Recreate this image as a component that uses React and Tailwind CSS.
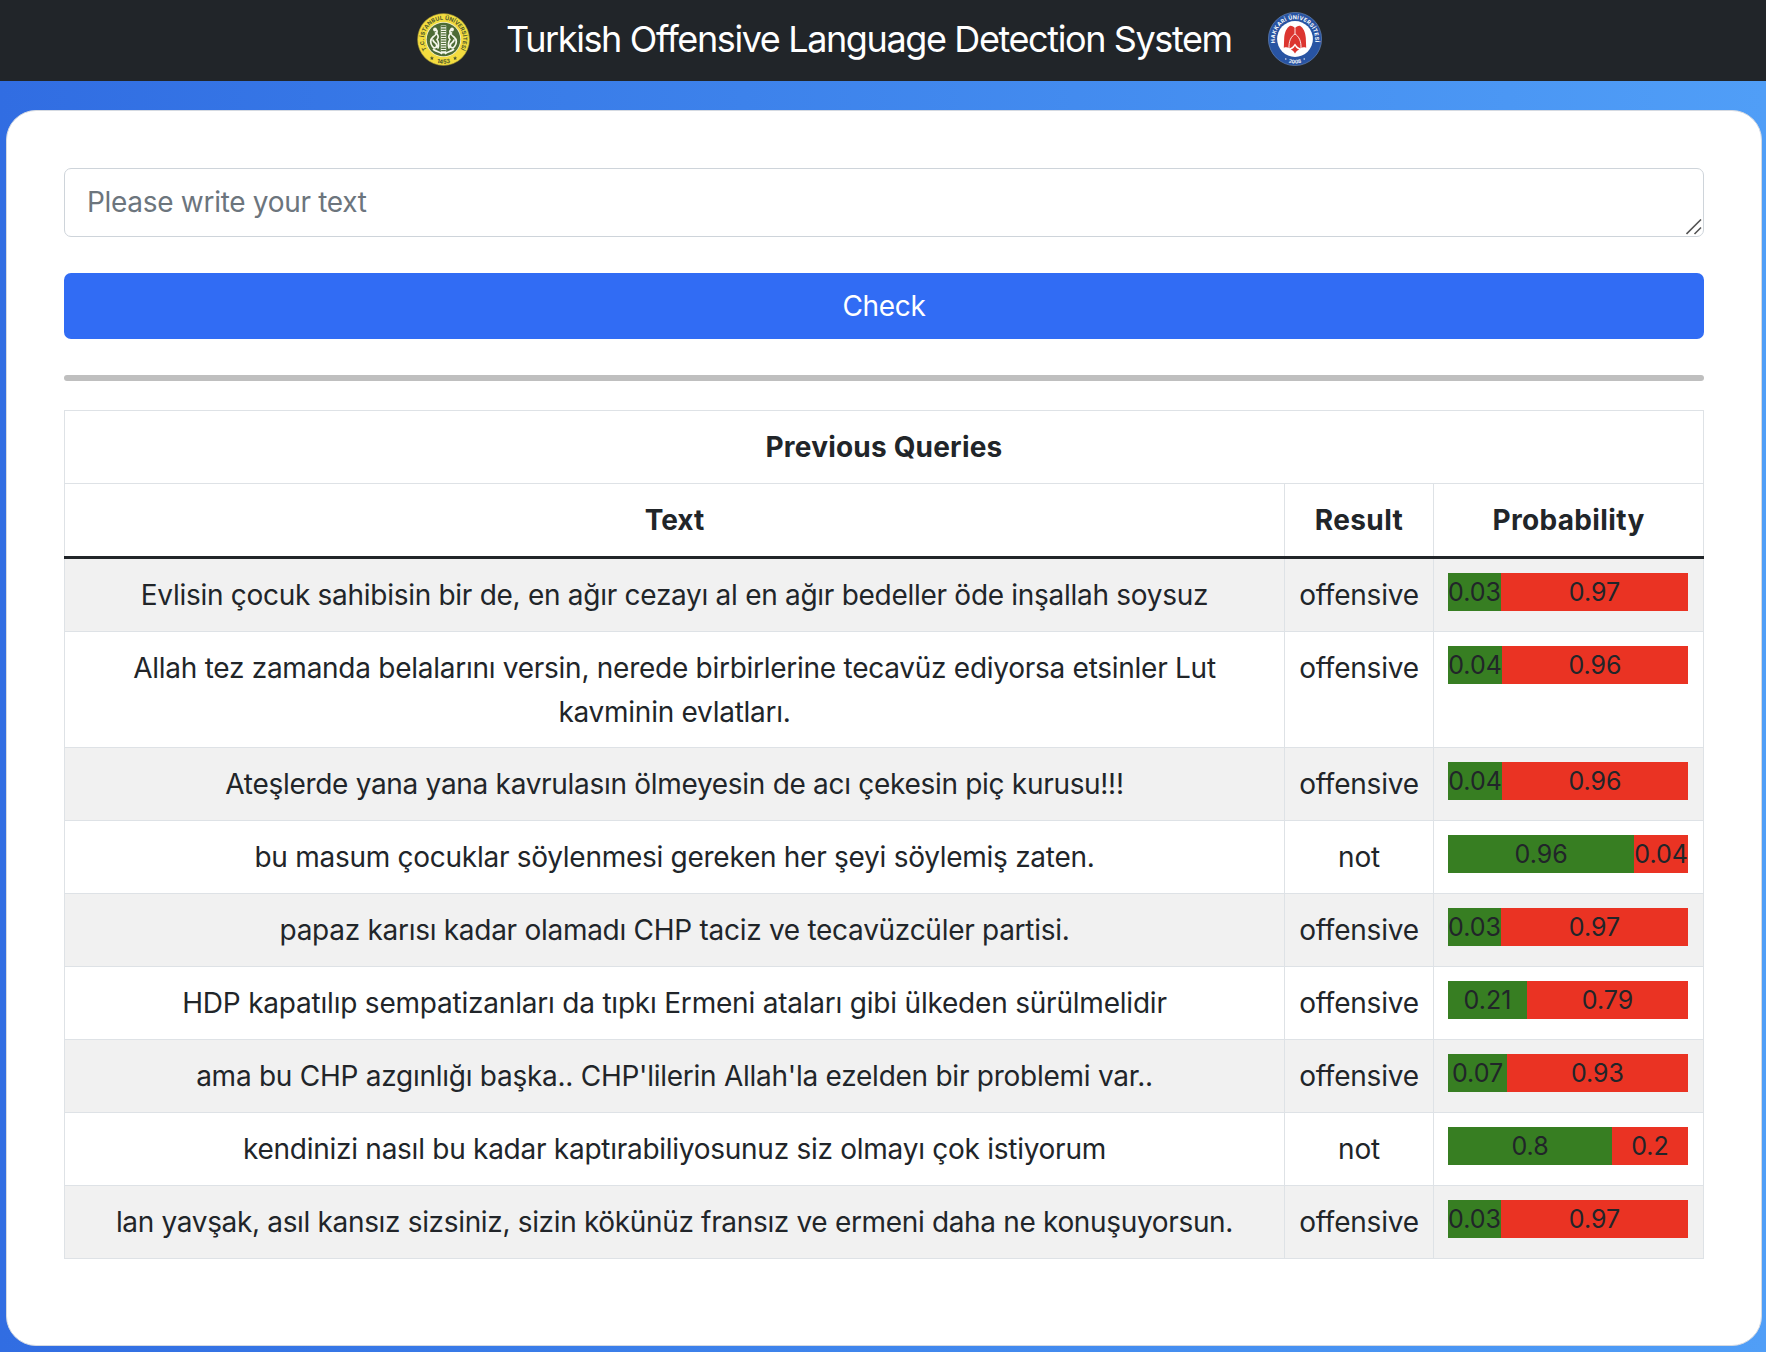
const queries = [
  {
    text: "Evlisin çocuk sahibisin bir de, en ağır cezayı al en ağır bedeller öde inşallah soysuz",
    tracking: "tracking-[-0.285px]",
    result: "offensive",
    not: "0.03",
    off: "0.97",
    width: 53,
  },
  {
    text: "Allah tez zamanda belalarını versin, nerede birbirlerine tecavüz ediyorsa etsinler Lut kavminin evlatları.",
    tracking: "tracking-[-0.265px]",
    result: "offensive",
    not: "0.04",
    off: "0.96",
    width: 54,
  },
  {
    text: "Ateşlerde yana yana kavrulasın ölmeyesin de acı çekesin piç kurusu!!!",
    tracking: "tracking-[-0.3px]",
    result: "offensive",
    not: "0.04",
    off: "0.96",
    width: 54,
  },
  {
    text: "bu masum çocuklar söylenmesi gereken her şeyi söylemiş zaten.",
    tracking: "tracking-[-0.27px]",
    result: "not",
    not: "0.96",
    off: "0.04",
    width: 187,
  },
  {
    text: "papaz karısı kadar olamadı CHP taciz ve tecavüzcüler partisi.",
    tracking: "tracking-[-0.28px]",
    result: "offensive",
    not: "0.03",
    off: "0.97",
    width: 53,
  },
  {
    text: "HDP kapatılıp sempatizanları da tıpkı Ermeni ataları gibi ülkeden sürülmelidir",
    tracking: "tracking-[-0.21px]",
    result: "offensive",
    not: "0.21",
    off: "0.79",
    width: 79,
  },
  {
    text: "ama bu CHP azgınlığı başka.. CHP'lilerin Allah'la ezelden bir problemi var..",
    tracking: "tracking-[-0.26px]",
    result: "offensive",
    not: "0.07",
    off: "0.93",
    width: 59,
  },
  {
    text: "kendinizi nasıl bu kadar kaptırabiliyosunuz siz olmayı çok istiyorum",
    tracking: "tracking-[-0.265px]",
    result: "not",
    not: "0.8",
    off: "0.2",
    width: 164,
  },
  {
    text: "lan yavşak, asıl kansız sizsiniz, sizin kökünüz fransız ve ermeni daha ne konuşuyorsun.",
    tracking: "tracking-[-0.335px]",
    result: "offensive",
    not: "0.03",
    off: "0.97",
    width: 53,
  },
];

function IstanbulSeal() {
  return (
    <svg className="size-[53px] shrink-0" viewBox="-26.5 -26.5 53 53" aria-label="İstanbul Üniversitesi">
      <defs>
        <path id="ist-top" d="M-16.7 10.2A19.6 19.6 0 1 1 16.7 10.2" />
        <path id="ist-bottom" d="M-12 21A24 24 0 0 0 12 21" />
      </defs>
      <circle r="26" fill="#f3dc3f" stroke="#8d8334" strokeWidth="0.6" />
      <circle r="17.6" fill="#f7f3d0" />
      <circle r="16.8" fill="#4d6b35" />
      <g fill="#4f5a2c" fontFamily="Inter, sans-serif" fontWeight="700">
        <text fontSize="5.6">
          <textPath href="#ist-top" textLength="82">T.C. İSTANBUL ÜNİVERSİTESİ</textPath>
        </text>
        <text fontSize="5.8">
          <textPath href="#ist-bottom" startOffset="50%" textAnchor="middle">1453</textPath>
        </text>
      </g>
      <g fill="#4f5a2c">
        <path d="M-11.6 16.6l.6 1.3 1.4.1-1 1 .3 1.4-1.3-.7-1.2.7.2-1.4-1-1 1.4-.1z" />
        <path d="M11.6 16.6l.6 1.3 1.4.1-1 1 .3 1.4-1.3-.7-1.2.7.2-1.4-1-1 1.4-.1z" />
      </g>
      <g fill="none" stroke="#f4f6ea" strokeWidth="1.7" strokeLinecap="round" strokeLinejoin="round">
        <path d="M-7 -9.5C-5 -7 -8.500 -4 -10.500 -2.500C-13.500 0 -13.500 4 -11 7C-9 9.500 -6 8 -7 5C-8 3 -10 3 -10.500 0.500M-8 -6.500C-5 -5 -4.500 -2 -6.500 0C-5 2 -4.500 5 -5.500 8.500M-10 10C-7 12.500 -4 12 -2 14" />
        <path d="M7 -9.5C5 -7 8.500 -4 10.500 -2.500C13.500 0 13.500 4 11 7C9 9.500 6 8 7 5C8 3 10 3 10.500 0.500M8 -6.500C5 -5 4.500 -2 6.500 0C5 2 4.500 5 5.500 8.500M10 10C7 12.500 4 12 2 14" />
      </g>
      <circle cx="-8.500" cy="-10" r="1.900" fill="#f4f6ea" />
      <circle cx="8.500" cy="-10" r="1.900" fill="#f4f6ea" />
      <path d="M0 -14V14" stroke="#f4f6ea" strokeWidth="5.400" />
      <path d="M0 -13.400V13" stroke="#4d6b35" strokeWidth="4.600" strokeDasharray="1.200 1.200" />
    </svg>
  );
}

function HakkariSeal() {
  return (
    <svg className="size-[54px] shrink-0" viewBox="-27 -27 54 54" aria-label="Hakkari Üniversitesi">
      <defs>
        <path id="hak-top" d="M-19.900 3.800A20.200 20.200 0 1 1 19.900 3.800" />
        <path id="hak-bottom" d="M-12 21.200A24.400 24.400 0 0 0 12 21.200" />
      </defs>
      <circle r="26.600" fill="#2854a3" stroke="#6f8fbf" strokeWidth="0.600" />
      <circle r="17.900" fill="#ffffff" />
      <g fill="#ffffff" fontFamily="Inter, sans-serif" fontWeight="700">
        <text fontSize="5.400">
          <textPath href="#hak-top" textLength="69">HAKKARİ ÜNİVERSİTESİ</textPath>
        </text>
        <text fontSize="5">
          <textPath href="#hak-bottom" startOffset="50%" textAnchor="middle">2008</textPath>
        </text>
      </g>
      <circle cx="-9.200" cy="20" r="0.700" fill="#ffffff" />
      <circle cx="9.200" cy="20" r="0.700" fill="#ffffff" />
      <path
        fill="#dc3530"
        d="M-5 -13.200C-3 -13.400 -1.200 -12.400 0 -10.800C1.200 -12.400 3 -13.400 5 -13.200C8.500 -11 10.400 -6.500 10.800 -1L11.200 8.800C9 8 7.400 8.200 5.600 9.200C3.600 8.800 1.500 7 0 4.500C-1.500 7 -3.600 8.800 -5.600 9.200C-7.400 8.200 -9 8 -11.200 8.800L-10.800 -1C-10.400 -6.500 -8.500 -11 -5 -13.200Z"
      />
      <path
        fill="none"
        stroke="#ffffff"
        strokeWidth="0.900"
        d="M0 -10.800V-5M0 -5C-4 -2.500 -6.300 2 -6 9.400M0 -5C4 -2.500 6.300 2 6 9.400"
      />
      <path fill="#dc3530" d="M0 6.800C1 9 2.400 10 4.200 10.600C2.400 11.400 1 12.600 0 14.600C-1 12.600 -2.400 11.400 -4.200 10.600C-2.400 10 -1 9 0 6.800Z" />
    </svg>
  );
}

function ProbabilityBar({ not, off, width }) {
  return (
    <div className="flex h-[38px] w-[240px] text-[25px] leading-[39px]">
      <div className="bg-[#377e22] text-center" style={{ width }}>
        {not}
      </div>
      <div className="flex-1 bg-[#ea3323] text-center">{off}</div>
    </div>
  );
}

export default function App() {
  return (
    <div className="flex h-[1352px] flex-col overflow-hidden bg-linear-to-r from-[#316de2] to-[#509ef7] font-['Inter',sans-serif] text-[28px] leading-[43.5px] text-[#212529]">
      <header className="flex h-[81px] shrink-0 items-center bg-[#212529] pb-[3px] pl-[417px]">
        <IstanbulSeal />
        <h1 className="mr-[36px] ml-[36px] w-[726px] text-[36px] leading-[44px] tracking-[-1.39px] whitespace-nowrap text-white">
          Turkish Offensive Language Detection System
        </h1>
        <HakkariSeal />
      </header>

      <main className="mt-[29px] mr-[4px] ml-[6px] h-[1236px] rounded-[30px] border border-[#d5dae2] bg-white px-[57px] pt-[57px]">
        <div className="relative">
          <textarea
            className="block h-[69px] w-full resize-none rounded-[7px] border border-[#ced4da] bg-white px-[22px] pt-[12px] pb-[10px] tracking-[-0.3px] placeholder:text-[#6c757d] placeholder:opacity-100"
            placeholder="Please write your text"
          />
          <svg
            className="absolute right-[2px] bottom-[2px] size-[16px]"
            viewBox="0 0 16 16"
            fill="none"
            stroke="#555555"
            strokeWidth="1.6"
          >
            <path d="M0.500 15L15 0.500M8.500 15L15 8.500" />
          </svg>
        </div>
        <button className="mt-[36px] block h-[66px] w-full rounded-[7px] bg-[#316cf4] pt-px text-center tracking-[-0.3px] text-white">
          Check
        </button>
        <div className="mt-[36px] h-[6px] rounded-[3px] bg-[#bfbfbf]" />

        <table className="mt-[29px] w-full table-fixed border-separate border-spacing-0 text-center">
          <colgroup>
            <col className="w-[1221px]" />
            <col className="w-[149px]" />
            <col className="w-[270px]" />
          </colgroup>
          <thead>
            <tr className="h-[74px]">
              <th colSpan={3} className="border border-[#dee2e6] px-0 pt-[15px] pb-0 align-top font-bold tracking-[0.2px]">
                Previous Queries
              </th>
            </tr>
            <tr className="h-[72px]">
              <th className="border-r border-l border-[#dee2e6] px-0 pt-[15px] pb-0 align-top font-bold">
                Text
              </th>
              <th className="border-r border-[#dee2e6] px-0 pt-[15px] pb-0 align-top font-bold tracking-[0.4px]">
                Result
              </th>
              <th className="border-r border-[#dee2e6] px-0 pt-[15px] pb-0 align-top font-bold tracking-[0.35px]">
                Probability
              </th>
            </tr>
            <tr className="h-[3px]">
              <td colSpan={3} className="bg-[#212529] p-0" />
            </tr>
          </thead>
          <tbody>
            {queries.map((q, i) => (
              <tr key={i} className="h-[73px] odd:bg-[#f1f1f1]">
                <td className={`border-r border-b border-l border-[#dee2e6] px-[14px] pt-[15px] pb-[13px] align-top ${q.tracking}`}>
                  {q.text}
                </td>
                <td className="border-r border-b border-[#dee2e6] px-0 pt-[15px] pb-0 align-top tracking-[-0.2px]">
                  {q.result}
                </td>
                <td className="border-r border-b border-[#dee2e6] px-[14px] pt-[14px] pb-0 align-top">
                  <ProbabilityBar not={q.not} off={q.off} width={q.width} />
                </td>
              </tr>
            ))}
          </tbody>
        </table>
      </main>
    </div>
  );
}
